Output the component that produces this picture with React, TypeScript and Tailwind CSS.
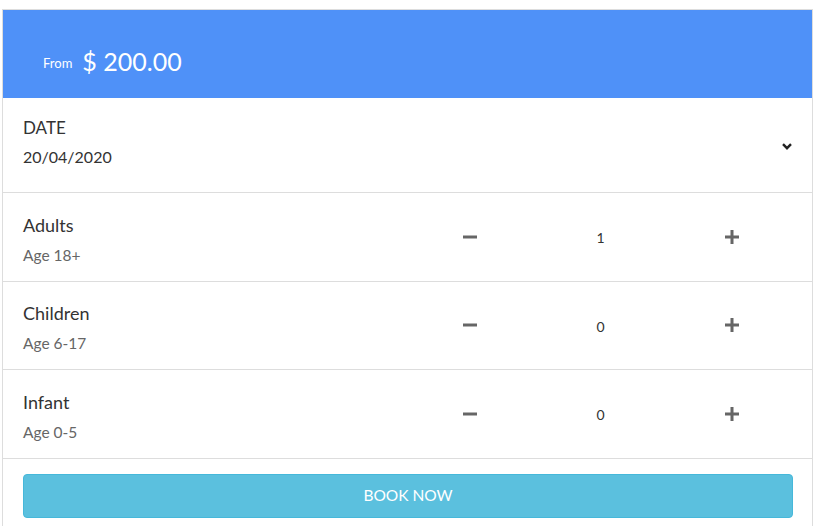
import React, { useState } from 'react';

type Guest = { label: string; age: string; count: number };

const Minus = () => (
  <svg width="14" height="14" viewBox="0 0 14 14" fill="none">
    <path d="M0 7h14" stroke="#666" strokeWidth="3" />
  </svg>
);

const Plus = () => (
  <svg width="14" height="14" viewBox="0 0 14 14" fill="none">
    <path d="M0 7h14M7 0v14" stroke="#666" strokeWidth="3" />
  </svg>
);

export default function App() {
  const [guests, setGuests] = useState<Guest[]>([
    { label: 'Adults', age: 'Age 18+', count: 1 },
    { label: 'Children', age: 'Age 6-17', count: 0 },
    { label: 'Infant', age: 'Age 0-5', count: 0 },
  ]);

  const change = (i: number, d: number) =>
    setGuests(g => g.map((x, j) => (j === i ? { ...x, count: Math.max(0, x.count + d) } : x)));

  return (
    <div className="bg-white min-h-screen pt-[9px] pl-[2px] font-['Lato',sans-serif] text-[#333]">
      <div className="w-[811px] border border-[#ddd] border-b-0">
        {/* Header */}
        <div className="h-[88px] bg-[#4f91f8] flex items-center pl-[40px] pt-[16px] text-white">
          <span className="text-[13px] mr-[10px] mt-[4px]">From</span>
          <span className="text-[25px]">$ 200.00</span>
        </div>

        {/* Date */}
        <div className="h-[95px] border-b border-[#ddd] flex items-center pl-[20px] pr-[20px]">
          <div className="flex-1 pb-[6px]">
            <p className="text-[17px] leading-[20px]">DATE</p>
            <p className="text-[16px] leading-[20px] mt-[9px]">20/04/2020</p>
          </div>
          <svg width="10" height="7" viewBox="0 0 10 7" fill="none" className="mt-[2px]">
            <path d="M1 1.2l4 4 4-4" stroke="#222" strokeWidth="2.4" />
          </svg>
        </div>

        {/* Guests */}
        {guests.map((g, i) => (
          <div key={g.label} className="h-[88.5px] border-b border-[#ddd] flex items-center pl-[20px] pr-[15px]">
            <div className="flex-1 pt-[5px]">
              <p className="text-[18px] leading-[22px]">{g.label}</p>
              <p className="text-[15.5px] leading-[20px] text-[#666] mt-[9px]">{g.age}</p>
            </div>
            <button onClick={() => change(i, -1)} className="w-[131px] flex justify-center">
              <Minus />
            </button>
            <span className="w-[131px] text-center text-[14px] pt-[2px]">{g.count}</span>
            <button onClick={() => change(i, 1)} className="w-[131px] flex justify-center">
              <Plus />
            </button>
          </div>
        ))}

        {/* Book */}
        <div className="pt-[15px] px-[20px] pb-[10px]">
          <button className="w-[770px] h-[44px] bg-[#5bc0de] border border-[#46b8da] rounded-[4px] text-white text-[15.5px]">
            BOOK NOW
          </button>
        </div>
      </div>
    </div>
  );
}
